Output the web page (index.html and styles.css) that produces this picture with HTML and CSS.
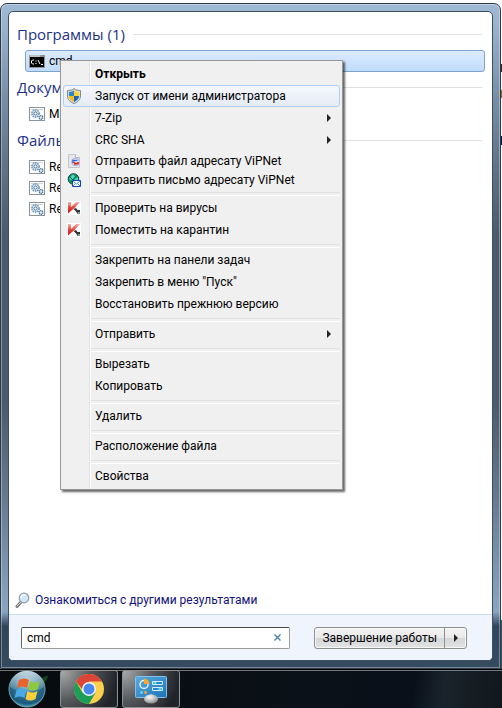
FILE: index.html
```html
<!DOCTYPE html>
<html lang="ru">
<head>
<meta charset="utf-8">
<title>Меню «Пуск»</title>
<link rel="stylesheet" href="styles.css">
</head>
<body>
<svg class="defs" aria-hidden="true">
  <defs>
    <linearGradient id="red" x1="0" y1="0" x2="0" y2="1"><stop offset="0" stop-color="#f3b5ae"/><stop offset=".5" stop-color="#e6403a"/><stop offset="1" stop-color="#d40f0f"/></linearGradient>
    <radialGradient id="orb" cx=".5" cy=".35" r=".7"><stop offset="0" stop-color="#7fb4c4"/><stop offset=".5" stop-color="#2a6d90"/><stop offset=".8" stop-color="#1d5a7c"/><stop offset="1" stop-color="#58d8f4"/></radialGradient>
    <linearGradient id="gloss" x1="0" y1="0" x2="0" y2="1"><stop offset="0" stop-color="#fff" stop-opacity=".7"/><stop offset="1" stop-color="#fff" stop-opacity=".1"/></linearGradient>
    <linearGradient id="panel" x1="0" y1="0" x2="1" y2="1"><stop offset="0" stop-color="#5cabdf"/><stop offset="1" stop-color="#1d73b8"/></linearGradient>
    <radialGradient id="mouse" cx=".4" cy=".3" r=".7"><stop offset="0" stop-color="#fff"/><stop offset="1" stop-color="#8b8b8b"/></radialGradient>
    <symbol id="gear" viewBox="0 0 16 14">
      <rect x=".5" y=".5" width="15" height="13" fill="#fff" stroke="#8b949c"/>
      <path d="M2 2.500h12" stroke="#cfd6dc"/>
      <circle cx="6.500" cy="6.500" r="3.600" fill="#e4edf4" stroke="#7397b4" stroke-width="1.600" stroke-dasharray="1.600 .7"/>
      <circle cx="6.500" cy="6.500" r="1.600" fill="#fff" stroke="#40749f"/>
      <circle cx="12" cy="10.500" r="1.800" fill="#dce8f0" stroke="#4b7698" stroke-width="1.300" stroke-dasharray="1.200 .5"/>
    </symbol>
    <symbol id="kav" viewBox="0 0 14 14">
      <path d="M0 0h14v14H0z" fill="#fff"/>
      <path d="M1 1h3v5l5-5h4L8 6.500 1 12.500z" fill="url(#red)"/>
      <path d="M6.500 8 9 7l1.500 2H13v4h-2.500l-1-2z" fill="#303636"/>
      <path d="M10.500 11h2.500v2h-2z" fill="#8a9290"/>
    </symbol>
    <symbol id="tri" viewBox="0 0 4 8"><path d="M0 0v8l4-4z" fill="#222"/></symbol>
  </defs>
</svg>

<main class="desktop">
  <section class="start-menu">
    <div class="inner">
      <div class="results">
        <h2>Программы (1)</h2>
        <a class="item selected" href="#"><svg width="16" height="13" viewBox="0 0 16 13"><path d="M0 0h16v13H0z" fill="#929292"/><path d="M1 2h14v10H1z" fill="#000"/><path d="M1 1h10" stroke="#eee"/><path d="M5 5H3.500L2.500 6v2l1 1H5M7 5.500v1M7 8v1M9 5l2 4M12 9.500h2" fill="none" stroke="#fff"/></svg>cmd</a>
        <h2>Документы</h2>
        <a class="item" href="#"><svg width="16" height="14"><use href="#gear"/></svg>Ma</a>
        <h2>Файлы</h2>
        <a class="item" href="#"><svg width="16" height="14"><use href="#gear"/></svg>Re</a>
        <a class="item" href="#"><svg width="16" height="14"><use href="#gear"/></svg>Re</a>
        <a class="item" href="#"><svg width="16" height="14"><use href="#gear"/></svg>Re</a>
        <a class="more" href="#"><svg width="16" height="16" viewBox="0 0 16 16"><path d="M2 14.500 6 10" stroke="#777" stroke-width="3" stroke-linecap="round"/><path d="M2 14 6 10" stroke="#ddd" stroke-linecap="round"/><circle cx="9" cy="6" r="4.800" fill="#cfe6f7" stroke="#909ba5" stroke-width="1.200"/><path d="M6 6a3 3 0 0 1 4-3" fill="none" stroke="#fff" stroke-width="1.500"/></svg>Ознакомиться с другими результатами</a>
      </div>
      <form class="footer">
        <div class="search">
          <input type="text" value="cmd" aria-label="Поиск">
          <button type="button" aria-label="Очистить"><svg width="7" height="7" viewBox="0 0 7 7"><path d="m.5.5 6 6m0-6-6 6" stroke="#4b7fa8" stroke-width="1.400"/></svg></button>
        </div>
        <div class="power">
          <button type="button" class="shutdown">Завершение работы</button>
          <button type="button" class="options" aria-label="Параметры"><svg width="4" height="8"><use href="#tri"/></svg></button>
        </div>
      </form>
    </div>

    <ul class="context" role="menu">
      <li><button class="bold"><i></i>Открыть</button></li>
      <li><button class="hot"><i><svg width="14" height="16" viewBox="0 0 14 16"><path d="M7 .5 9 2l4.500.5V8c0 3.500-2.500 6-6.500 7.500C3 14 .5 11.500.5 8V2.500L5 2z" fill="#d9dcdd" stroke="#85898c"/><path d="M7 2.500V8H2V4l3-.5z" fill="#2f84d0"/><path d="M7 2.500V8h5V4l-3-.5z" fill="#fbd32c"/><path d="M2 8h5v6C4 12.500 2 11 2 8z" fill="#f5bb18"/><path d="M12 8H7v6c3-1.500 5-3 5-6z" fill="#1b65b8"/></svg></i>Запуск от имени администратора</button></li>
      <li><button><i></i>7-Zip<svg class="arrow"><use href="#tri"/></svg></button></li>
      <li><button><i></i>CRC SHA<svg class="arrow"><use href="#tri"/></svg></button></li>
      <li class="short"><button><i><svg width="14" height="14" viewBox="0 0 14 14"><path d="M1.500.5h7l4 3v10h-11z" fill="#e5e7ea" stroke="#c3c6ca"/><path d="M8.500.5v3h4" fill="#fff" stroke="#b5b8bc"/><circle cx="8.500" cy="8" r="3.700" fill="#fff" stroke="#a8b5e6" stroke-width="1.200"/><path d="M6 9V6.500h4.500" fill="none" stroke="#3465d4" stroke-width="1.500"/><path d="M7 8l1 2 3-.5V8" fill="none" stroke="#ea281f" stroke-width="1.800"/></svg></i>Отправить файл адресату ViPNet</button></li>
      <li class="short"><button><i><svg width="14" height="14" viewBox="0 0 14 14"><circle cx="6.500" cy="6" r="5.300" fill="#19a55a" stroke="#073e55"/><path d="M2 6 6 1.500 8 4 5 7zM7 7l4-3v4" fill="#51d9d8"/><path d="M2 3 9 10M10 2 3 10" stroke="#066b35"/><path d="M5.500 7.500h8v6h-8z" fill="#fff" stroke="#163fc0"/><path d="m6 8 3.500 3L13 8M6 13l2.500-2.500M13 13l-2.500-2.500" fill="none" stroke="#40a3a8"/></svg></i>Отправить письмо адресату ViPNet</button></li>
      <li class="sep" role="separator"></li>
      <li><button><i><svg width="14" height="14"><use href="#kav"/></svg></i>Проверить на вирусы</button></li>
      <li><button><i><svg width="14" height="14"><use href="#kav"/></svg></i>Поместить на карантин</button></li>
      <li class="sep" role="separator"></li>
      <li><button><i></i>Закрепить на панели задач</button></li>
      <li><button><i></i>Закрепить в меню "Пуск"</button></li>
      <li><button><i></i>Восстановить прежнюю версию</button></li>
      <li class="sep" role="separator"></li>
      <li><button><i></i>Отправить<svg class="arrow"><use href="#tri"/></svg></button></li>
      <li class="sep" role="separator"></li>
      <li><button><i></i>Вырезать</button></li>
      <li><button><i></i>Копировать</button></li>
      <li class="sep" role="separator"></li>
      <li><button><i></i>Удалить</button></li>
      <li class="sep" role="separator"></li>
      <li><button><i></i>Расположение файла</button></li>
      <li class="sep" role="separator"></li>
      <li><button><i></i>Свойства</button></li>
    </ul>
  </section>
</main>

<nav class="taskbar">
  <button class="orb" aria-label="Пуск"><svg width="52" height="38" viewBox="0 0 52 38">
    <path d="M36 14c6-6 10-9 12-8-1 5-5 8-11 14z" fill="#145c1c" opacity=".7"/>
    <circle cx="27" cy="19" r="18" fill="url(#orb)" stroke="#7fa1ac"/>
    <path d="M10 17a17 16 0 0 1 34 0c-7 6-25 7-34 0z" fill="url(#gloss)"/>
    <path d="M19 10c3-2 6-2 10 0l-2 8c-4-2-7-2-10 0z" fill="#e9632c"/>
    <path d="M30 11c3 2 6 2 10 0l-2 8c-4 2-7 2-10 0z" fill="#8dc93e"/>
    <path d="M16.500 20c3-2 6-2 10 0l-2 8c-4-2-7-2-10 0z" fill="#4aa9e5"/>
    <path d="M27.500 21c3 2 6 2 10 0l-2 8c-4 2-7 2-10 0z" fill="#fbd03b"/>
  </svg></button>
  <button class="task" aria-label="Chrome"><svg width="30" height="30" viewBox="0 0 30 30">
    <circle cx="15" cy="15" r="15" fill="#fbd14b"/>
    <path d="M2 7.500A15 15 0 0 0 15 30l6.500-11.300L15 15l-6.500 3.700z" fill="#1c9d58"/>
    <path d="M15 15h-7L2 7.500A15 15 0 0 1 28 7.500H15z" fill="#dc4437"/>
    <circle cx="15" cy="15" r="7" fill="#f4f4f4"/><circle cx="15" cy="15" r="5.500" fill="#4687f4"/>
  </svg></button>
  <button class="task" aria-label="Панель управления"><svg width="32" height="30" viewBox="0 0 32 30">
    <rect x=".5" y="2.500" width="31" height="21" rx="1" fill="url(#panel)" stroke="#7fc3ea"/>
    <circle cx="9" cy="10.500" r="4" fill="none" stroke="#e3f3fc" stroke-width="1.500"/><path d="M9 10V4.500a5.500 5.500 0 0 1 5.500 5.500z" fill="#f7a52b"/>
    <path d="M17.500 7.500h10v3h-10zM17.500 13.500h10v3h-10z" fill="#258ac9" stroke="#d5eefa"/>
    <path d="M20 8v2M25 14v2" stroke="#64d2f6" stroke-width="3"/>
    <circle cx="6.500" cy="18.500" r="1.400" fill="#64d8f8"/><circle cx="10.500" cy="18.500" r="1.400" fill="#f7a52b"/>
    <ellipse cx="16" cy="25" rx="7" ry="4.500" fill="url(#mouse)"/><path d="M16 23v-3" stroke="#ddd"/>
  </svg></button>
</nav>
</body>
</html>
```
FILE: styles.css
```css
* { box-sizing: border-box; }

body {
  margin: 0;
  min-height: 100vh;
  display: flex;
  flex-direction: column;
  font: 12px/16px Roboto, "Open Sans", sans-serif;
  color: #000;
  background: #fff;
}

button, input { font: inherit; color: inherit; }
button { padding: 0; border: 0; background: none; }
a { color: inherit; text-decoration: none; }
svg { flex: none; }
.defs { position: absolute; width: 0; height: 0; }

.desktop {
  flex: 1;
  display: flex;
  padding: 3px 1px 0 0;
  background:
    linear-gradient(#40200c, #40200c) right 64px / 2px 8px no-repeat,
    linear-gradient(#a5600c, #a5600c) right 90px / 2px 8px no-repeat,
    linear-gradient(#10104a, #10104a) right 136px / 2px 9px no-repeat,
    linear-gradient(#3c5260, #3c5260) right bottom / 2px 49px no-repeat,
    #fff;
}

.start-menu {
  flex: 1;
  position: relative;
  display: flex;
  padding: 7px;
  border: 1px solid #2c3a48;
  border-radius: 7px 7px 0 0;
  box-shadow: inset 0 0 0 1px rgba(255, 255, 255, .35);
  background: linear-gradient(#9fb9d5 0, #98b1cc 25px, #7890a8 90px, #64788c 150px, #4a5c6b 230px, #4a5c6b 400px, #65798e 490px, #88a3bf 600px, #88a3bf 608px, #30455a 622px, #354b60 100%);
}

.inner {
  flex: 1;
  display: flex;
  flex-direction: column;
  border: 1px solid #3c4f61;
  border-radius: 5px;
  background: #fff;
  overflow: hidden;
}

.results {
  flex: 1;
  display: flex;
  flex-direction: column;
  padding: 6px 7px 6px 8px;
}

h2 {
  display: flex;
  align-items: center;
  gap: 8px;
  height: 32px;
  margin: 0 3px 0 0;
  font: 15px/20px "Open Sans", "Noto Sans", sans-serif;
  color: #1e3287;
}
h2::after { content: ""; flex: 1; height: 1px; background: #e0e0e0; }

.item {
  display: flex;
  align-items: center;
  gap: 4px;
  height: 21px;
  margin-left: 8px;
  padding-left: 4px;
}
.item.selected {
  height: 22px;
  margin-bottom: -1px;
  padding-left: 3px;
  border: 1px solid #7da2ce;
  border-radius: 3px;
  background: linear-gradient(#dcebfd, #c1dbfc);
}

.more {
  display: flex;
  align-items: center;
  gap: 4px;
  margin-top: auto;
  margin-left: -2px;
  color: #11117a;
}

.footer {
  display: flex;
  align-items: center;
  gap: 24px;
  height: 46px;
  padding: 0 25px 0 12px;
  border-top: 1px solid #cfdcea;
  background: #f0f4fc;
}
.search {
  flex: 1;
  display: flex;
  height: 22px;
  border: 1px solid #9a9a9a;
  border-top-color: #444;
  border-left-color: #666;
  border-radius: 2px;
  background: #fff;
}
.search input { flex: 1; min-width: 0; padding: 0 5px; border: 0; background: none; outline: 0; }
.search button { display: grid; place-items: center; width: 23px; }

.power {
  display: flex;
  height: 22px;
  border: 1px solid #8e8f8f;
  border-radius: 3px;
  background: linear-gradient(#f3f3f3 0, #e9e9ea 48%, #d5d6d8 52%, #e2e3e5 100%);
  box-shadow: inset 0 0 0 1px rgba(255, 255, 255, .7);
}
.shutdown { padding: 0 7px; }
.options { display: grid; place-items: center; width: 22px; border-left: 1px solid #8e8f8f; }

.context {
  position: absolute;
  top: 56px;
  left: 59px;
  width: 283px;
  margin: 0;
  padding: 2px;
  list-style: none;
  border: 1px solid #979797;
  background:
    linear-gradient(#e2e3e3, #e2e3e3) 28px 0 / 1px 100% no-repeat,
    linear-gradient(#fff, #fff) 29px 0 / 1px 100% no-repeat,
    #f0f0f0;
  box-shadow: 2px 2px 2px rgba(0, 0, 0, .6);
}
.context button {
  display: flex;
  align-items: center;
  width: 100%;
  height: 22px;
  padding-right: 8px;
  border: 1px solid transparent;
  border-radius: 3px;
  text-align: left;
}
.context .short button { height: 19px; }
.context i { display: grid; place-items: center; width: 20px; margin-right: 11px; }
.context .bold { font-weight: 700; }
.context .hot { border-color: #aecff7; background: linear-gradient(rgba(246, 249, 254, .8), rgba(226, 234, 246, .8)); }
.arrow { width: 4px; height: 8px; margin-left: auto; }
.sep { height: 8px; padding: 3px 0 0 28px; }
.sep::before { content: ""; display: block; height: 2px; border-top: 1px solid #e0e0e0; border-bottom: 1px solid #fff; }

.taskbar {
  display: flex;
  height: 39px;
  gap: 4px;
  border-top: 1px solid #000;
  box-shadow: inset 0 1px #6c7a80;
  background: linear-gradient(100deg, #070b0e 0, #0a1118 60%, #09101a 82%, #1a232b 88%, #10171c 100%);
}
.orb { width: 56px; }
.orb svg { display: block; }
.task {
  display: grid;
  place-items: center;
  width: 58px;
  border: 1px solid #8e9294;
  border-radius: 3px;
  background: radial-gradient(circle at 0 0, #a9aaab, #55585b 45%, #202429 85%);
}
```
